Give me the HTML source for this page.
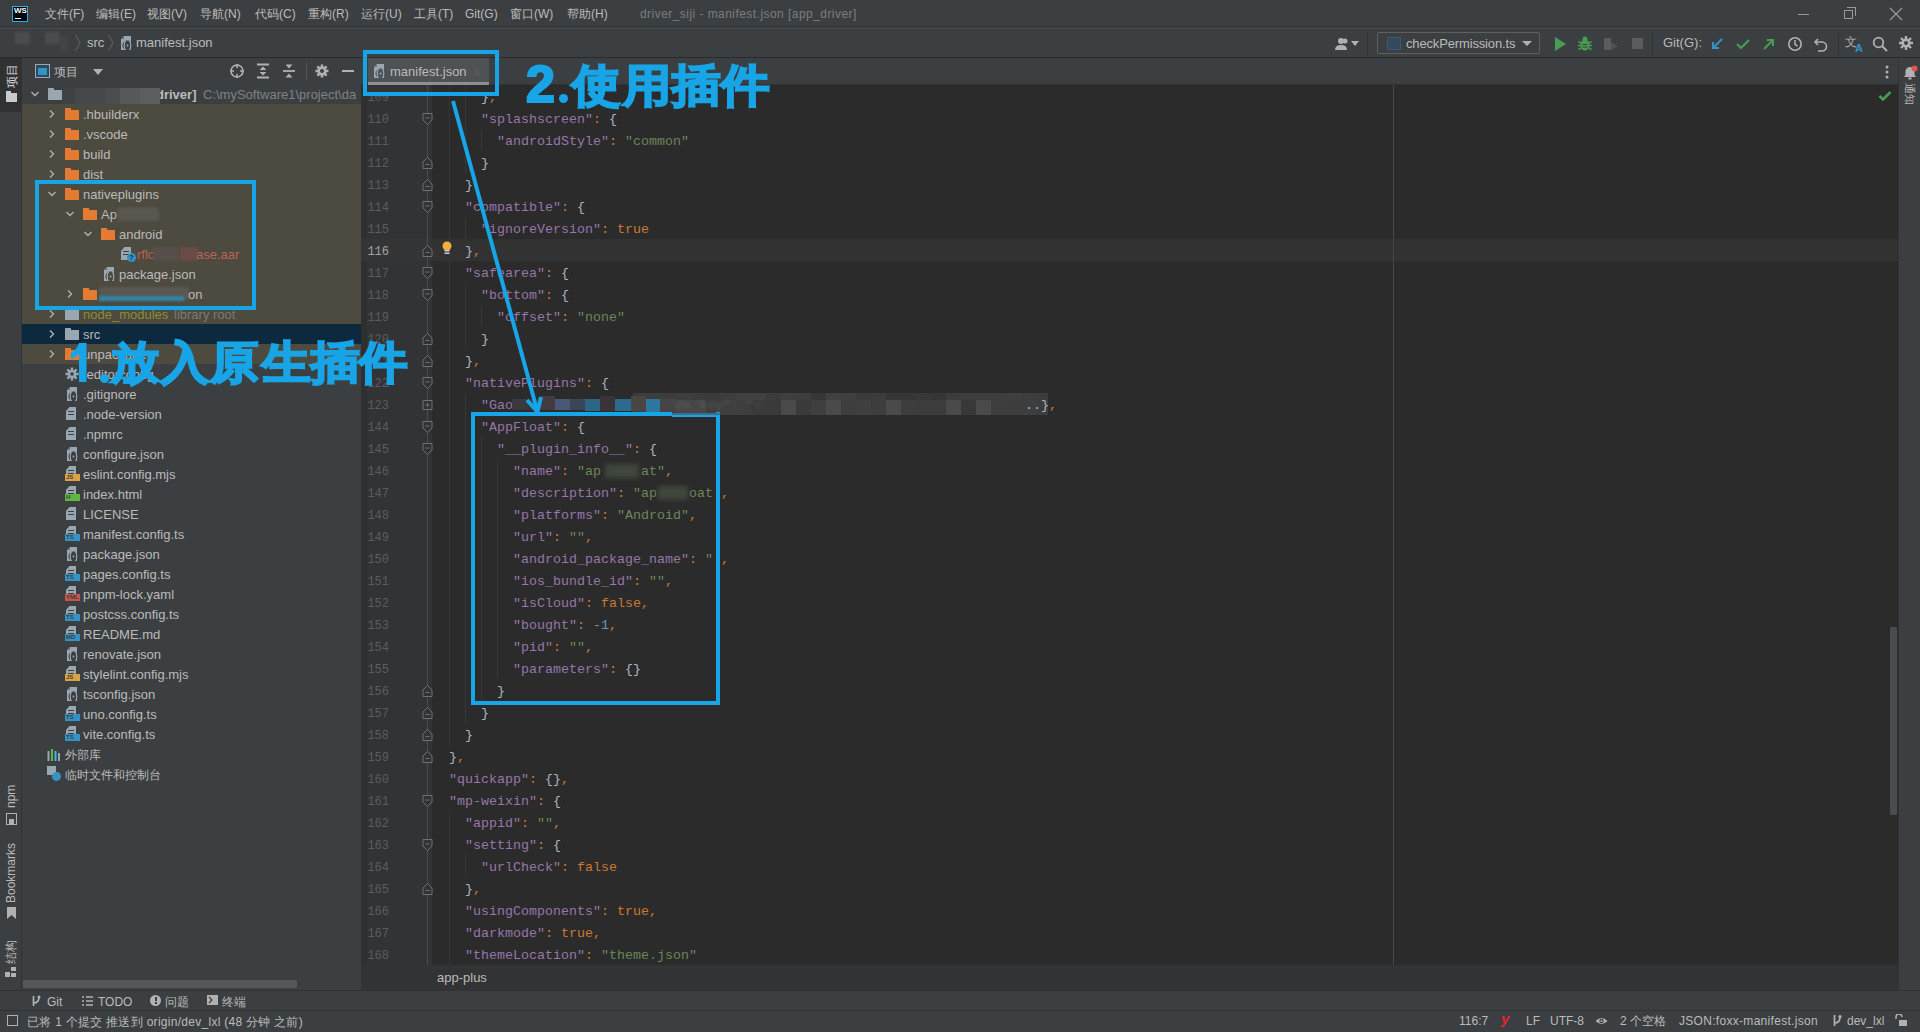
<!DOCTYPE html><html><head><meta charset="utf-8"><style>
*{margin:0;padding:0;box-sizing:border-box}
html,body{width:1920px;height:1032px;overflow:hidden;background:#3C3F41;font-family:"Liberation Sans",sans-serif;}
.a{position:absolute}
.t{position:absolute;white-space:pre;font-size:13px;color:#BBBBBB;line-height:20px}
.mono{font-family:"Liberation Mono",monospace}
.code{position:absolute;white-space:pre;font-family:"Liberation Mono",monospace;font-size:13.33px;line-height:22px;color:#A9B7C6;letter-spacing:0px}
.k{color:#9876AA}.s{color:#6A8759}.b{color:#CC7832}.n{color:#6897BB}.p{color:#CC7832}
.ln{position:absolute;font-family:"Liberation Mono",monospace;font-size:12px;color:#5A5D60;line-height:22px;text-align:right;width:30px}
.blue{border:4px solid #19A2E2}
</style></head><body>
<div class="a" style="left:0;top:0;width:1920px;height:28px;background:#3C3F41"></div>
<div class="a" style="left:0;top:26px;width:1920px;height:1px;background:#35383A"></div><div class="a" style="left:0;top:28px;width:1920px;height:1px;background:#46494B"></div>
<div class="a" style="left:12px;top:6px;width:16px;height:16px;background:#000;border:1px solid #21B1E8"></div>
<div class="a" style="left:14px;top:6px;font:bold 8px 'Liberation Sans';color:#fff;line-height:10px">WS</div>
<div class="a" style="left:15px;top:18px;width:6px;height:1px;background:#fff"></div>
<div class="t" style="left:45px;top:4px;font-size:12px;color:#BBBBBB">文件(F)</div>
<div class="t" style="left:96px;top:4px;font-size:12px;color:#BBBBBB">编辑(E)</div>
<div class="t" style="left:147px;top:4px;font-size:12px;color:#BBBBBB">视图(V)</div>
<div class="t" style="left:200px;top:4px;font-size:12px;color:#BBBBBB">导航(N)</div>
<div class="t" style="left:255px;top:4px;font-size:12px;color:#BBBBBB">代码(C)</div>
<div class="t" style="left:308px;top:4px;font-size:12px;color:#BBBBBB">重构(R)</div>
<div class="t" style="left:361px;top:4px;font-size:12px;color:#BBBBBB">运行(U)</div>
<div class="t" style="left:414px;top:4px;font-size:12px;color:#BBBBBB">工具(T)</div>
<div class="t" style="left:465px;top:4px;font-size:12px;color:#BBBBBB">Git(G)</div>
<div class="t" style="left:510px;top:4px;font-size:12px;color:#BBBBBB">窗口(W)</div>
<div class="t" style="left:567px;top:4px;font-size:12px;color:#BBBBBB">帮助(H)</div>
<div class="t" style="left:640px;top:4px;font-size:12px;letter-spacing:0.45px;color:#7A7D80">driver_siji - manifest.json [app_driver]</div>
<div class="a" style="left:1798px;top:14px;width:11px;height:1px;background:#9A9A9A"></div>
<div class="a" style="left:1844px;top:10px;width:9px;height:9px;border:1px solid #9A9A9A"></div><div class="a" style="left:1847px;top:7px;width:9px;height:9px;border-top:1px solid #9A9A9A;border-right:1px solid #9A9A9A"></div>
<svg class="a" style="left:1889px;top:7px" width="14" height="14"><path d="M1 1L13 13M13 1L1 13" stroke="#9A9A9A" stroke-width="1.2"/></svg>
<div class="a" style="left:0;top:57px;width:1920px;height:1px;background:#2B2B2B"></div>
<div class="a" style="left:15px;top:32px;width:15px;height:12px;background:#4A4C4E;filter:blur(0.8px)"></div>
<div class="a" style="left:45px;top:32px;width:15px;height:12px;background:#4A4C4E;filter:blur(0.8px)"></div>
<div class="a" style="left:60px;top:36px;width:8px;height:14px;background:#424547;filter:blur(1.5px)"></div>
<svg class="a" style="left:74px;top:34px" width="8" height="18"><path d="M1.5 1L6 9L1.5 17" stroke="#595C5E" stroke-width="1.3" fill="none"/></svg>
<div class="t" style="left:87px;top:33px;font-size:13px;color:#BBBBBB">src</div>
<svg class="a" style="left:107px;top:34px" width="8" height="18"><path d="M1.5 1L6 9L1.5 17" stroke="#595C5E" stroke-width="1.3" fill="none"/></svg>
<svg class="a" style="left:119px;top:35px" width="15" height="16"><path d="M5 1H12V15H2V4Z" fill="#9AA7B0"/><path d="M2 4L5 1V4Z" fill="#3C3F41" opacity="0.5"/><circle cx="8.5" cy="10.5" r="5" fill="#3C3F41"/><path d="M7 6.5Q5.3 6.5 5.5 8.5Q5.6 10.5 4.5 10.5Q5.6 10.5 5.5 12.5Q5.3 14.5 7 14.5M10 6.5Q11.7 6.5 11.5 8.5Q11.4 10.5 12.5 10.5Q11.4 10.5 11.5 12.5Q11.7 14.5 10 14.5" stroke="#9AA7B0" stroke-width="1.2" fill="none"/><circle cx="8.5" cy="10.5" r="1" fill="#9AA7B0"/></svg>
<div class="t" style="left:136px;top:33px;font-size:13px;color:#BBBBBB">manifest.json</div>
<div class="a" style="left:1334px;top:37px;width:12px;height:12px;"><svg width="20" height="14"><circle cx="7" cy="4" r="3" fill="#AFB1B3"/><path d="M1 13 Q1 8 7 8 Q13 8 13 13Z" fill="#AFB1B3"/><circle cx="11" cy="4" r="2.5" fill="#AFB1B3"/></svg></div>
<div class="a" style="left:1351px;top:41px;width:0;height:0;border-left:4px solid transparent;border-right:4px solid transparent;border-top:5px solid #AFB1B3"></div>
<div class="a" style="left:1367px;top:33px;width:1px;height:22px;background:#323232"></div>
<div class="a" style="left:1377px;top:32px;width:163px;height:22px;border:1px solid #5E6060;border-radius:2px"></div>
<div class="a" style="left:1387px;top:37px;width:14px;height:13px;border:1px solid #3A5A78;background:#34495A"></div>
<div class="t" style="left:1406px;top:34px;font-size:13px;letter-spacing:-0.15px;color:#BBBBBB">checkPermission.ts</div>
<div class="a" style="left:1522px;top:41px;width:0;height:0;border-left:5px solid transparent;border-right:5px solid transparent;border-top:5px solid #AFB1B3"></div>
<svg class="a" style="left:1552px;top:36px" width="16" height="16"><path d="M3 1 L14 8 L3 15Z" fill="#499C54"/></svg>
<svg class="a" style="left:1577px;top:35px" width="16" height="17"><ellipse cx="8" cy="10" rx="4.5" ry="5.5" fill="#499C54"/><circle cx="8" cy="4" r="2.5" fill="#499C54"/><path d="M1.5 6.5L4 8M14.5 6.5L12 8M1 10.5H4M15 10.5H12M1.5 14.5L4 13M14.5 14.5L12 13" stroke="#499C54" stroke-width="1.5"/><path d="M5.5 9.5H10.5M5.5 12H10.5" stroke="#3C3F41" stroke-width="1"/></svg>
<svg class="a" style="left:1602px;top:36px" width="18" height="16"><path d="M2 2H9V14H2Z" fill="#5A5D5F"/><path d="M9 6L16 10L9 14Z" fill="#4E5153"/></svg>
<div class="a" style="left:1632px;top:38px;width:11px;height:11px;background:#5A5D5F"></div>
<div class="a" style="left:1652px;top:33px;width:1px;height:22px;background:#323232"></div>
<div class="t" style="left:1663px;top:33px;font-size:13px;color:#BBBBBB">Git(G):</div>
<svg class="a" style="left:1709px;top:36px" width="16" height="16"><path d="M13 3L4 12M4 6V12H10" stroke="#3592C4" stroke-width="2" fill="none"/></svg>
<svg class="a" style="left:1735px;top:36px" width="16" height="16"><path d="M2 8L6 12L14 4" stroke="#499C54" stroke-width="2.2" fill="none"/></svg>
<svg class="a" style="left:1761px;top:36px" width="16" height="16"><path d="M3 13L12 4M6 4H12V10" stroke="#499C54" stroke-width="2" fill="none"/></svg>
<svg class="a" style="left:1787px;top:36px" width="16" height="16"><circle cx="8" cy="8" r="6.2" stroke="#AFB1B3" stroke-width="1.6" fill="none"/><path d="M8 4V8.5L10.5 10" stroke="#AFB1B3" stroke-width="1.5" fill="none"/></svg>
<svg class="a" style="left:1813px;top:36px" width="16" height="16"><path d="M5 3L2 6L5 9M2 6H9A4.5 4.5 0 0 1 9 15H5" stroke="#AFB1B3" stroke-width="1.6" fill="none"/></svg>
<div class="a" style="left:1838px;top:33px;width:1px;height:22px;background:#323232"></div>
<div class="t" style="left:1845px;top:32px;font-size:12px;color:#AFB1B3">文</div>
<div class="t" style="left:1855px;top:38px;font-size:11px;font-weight:bold;color:#3592C4">A</div>
<svg class="a" style="left:1872px;top:36px" width="16" height="16"><circle cx="6.5" cy="6.5" r="4.8" stroke="#AFB1B3" stroke-width="1.8" fill="none"/><path d="M10 10L15 15" stroke="#AFB1B3" stroke-width="2"/></svg>
<svg class="a" style="left:1898px;top:35px" width="16" height="16"><circle cx="8" cy="8" r="4.5" fill="#AFB1B3"/><circle cx="8" cy="8" r="2" fill="#3C3F41"/><path d="M8 1V15M1 8H15M3 3L13 13M13 3L3 13" stroke="#AFB1B3" stroke-width="2.4"/><circle cx="8" cy="8" r="2" fill="#3C3F41"/></svg>
<div class="a" style="left:0;top:58px;width:21px;height:932px;background:#3C3F41"></div>
<div class="a" style="left:0;top:58px;width:21px;height:54px;background:#2F3133"></div>
<div class="a" style="left:21px;top:58px;width:1px;height:932px;background:#323232"></div>
<div class="t" style="left:2px;top:88px;font-size:12px;line-height:20px;color:#DDDDDD;transform-origin:0 0;transform:rotate(-90deg)">项目</div>
<div class="a" style="left:6px;top:93px;width:11px;height:9px;background:#C9CCCE"></div><div class="a" style="left:6px;top:91px;width:5px;height:3px;background:#C9CCCE"></div>
<div class="t" style="left:1px;top:808px;font-size:12px;line-height:20px;color:#BBBBBB;transform-origin:0 0;transform:rotate(-90deg)">npm</div>
<div class="a" style="left:6px;top:813px;width:11px;height:12px;border:1.5px solid #AFB1B3"></div><div class="a" style="left:9px;top:819px;width:5px;height:6px;background:#AFB1B3"></div>
<div class="t" style="left:1px;top:903px;font-size:12px;line-height:20px;color:#BBBBBB;transform-origin:0 0;transform:rotate(-90deg)">Bookmarks</div>
<svg class="a" style="left:6px;top:907px" width="11" height="12"><path d="M1 0H10V12L5.5 8L1 12Z" fill="#AFB1B3"/></svg>
<div class="t" style="left:1px;top:964px;font-size:12px;line-height:20px;color:#BBBBBB;transform-origin:0 0;transform:rotate(-90deg)">结构</div>
<div class="a" style="left:5px;top:972px;width:5px;height:5px;background:#AFB1B3"></div><div class="a" style="left:11px;top:967px;width:5px;height:4px;background:#AFB1B3"></div><div class="a" style="left:11px;top:973px;width:5px;height:4px;background:#AFB1B3"></div>
<div class="a" style="left:22px;top:58px;width:339px;height:932px;background:#3C3F41"></div>
<div class="a" style="left:35px;top:64px;width:15px;height:14px;border:1.5px solid #9AA7B0;background:#2B4A5E"></div><div class="a" style="left:38px;top:68px;width:9px;height:7px;background:#3592C4"></div>
<div class="t" style="left:54px;top:62px;font-size:12px;color:#BBBBBB">项目</div>
<div class="a" style="left:93px;top:69px;width:0;height:0;border-left:5px solid transparent;border-right:5px solid transparent;border-top:6px solid #AFB1B3"></div>
<svg class="a" style="left:229px;top:63px" width="16" height="16"><circle cx="8" cy="8" r="6" stroke="#AFB1B3" stroke-width="1.6" fill="none"/><path d="M8 1V5M8 11V15M1 8H5M11 8H15" stroke="#AFB1B3" stroke-width="1.6"/></svg>
<svg class="a" style="left:256px;top:63px" width="14" height="16"><path d="M1 1.5H13M1 14.5H13" stroke="#AFB1B3" stroke-width="1.8"/><path d="M3.5 7H10.5L7 3.5Z M3.5 9H10.5L7 12.5Z" fill="#AFB1B3"/></svg>
<svg class="a" style="left:282px;top:63px" width="14" height="16"><path d="M1 8H13" stroke="#AFB1B3" stroke-width="1.8"/><path d="M3.5 1.5H10.5L7 5.5Z M3.5 14.5H10.5L7 10.5Z" fill="#AFB1B3"/></svg>
<div class="a" style="left:306px;top:62px;width:1px;height:18px;background:#515658"></div>
<svg class="a" style="left:314px;top:63px" width="16" height="16"><path d="M8 1.5V14.5M1.5 8H14.5M3.4 3.4L12.6 12.6M12.6 3.4L3.4 12.6" stroke="#AFB1B3" stroke-width="2.6"/><circle cx="8" cy="8" r="4.6" fill="#AFB1B3"/><circle cx="8" cy="8" r="2" fill="#3C3F41"/></svg>
<div class="a" style="left:342px;top:70px;width:12px;height:2px;background:#AFB1B3"></div>
<div class="a" style="left:22px;top:104px;width:339px;height:220px;background:#4D4A3F"></div>
<div class="a" style="left:22px;top:324px;width:339px;height:20px;background:#0D293E"></div>
<div class="a" style="left:22px;top:344px;width:339px;height:20px;background:#4D4A3F"></div>
<svg class="a" style="left:30px;top:89px" width="10" height="10"><path d="M1.5 3L5 6.5L8.5 3" stroke="#AFB1B3" stroke-width="1.4" fill="none"/></svg>
<div class="a" style="left:48px;top:88px;width:6px;height:3px;background:#9AA7B0"></div><div class="a" style="left:48px;top:90px;width:14px;height:10px;background:#9AA7B0"></div>
<div class="a" style="left:62px;top:88px;width:13px;height:16px;background:#3F4244"></div>
<div class="a" style="left:75px;top:88px;width:30px;height:16px;background:#46494B"></div>
<div class="a" style="left:105px;top:88px;width:15px;height:16px;background:#4B4E50"></div>
<div class="a" style="left:120px;top:88px;width:20px;height:16px;background:#56585A"></div>
<div class="a" style="left:140px;top:88px;width:19px;height:16px;background:#5B5D5F"></div>
<div class="t" style="left:156px;top:85px;font-weight:bold;color:#BBBBBB">driver]</div>
<div class="a" style="left:155px;top:88px;width:5px;height:16px;background:#5B5D5F"></div>
<div class="t" style="left:203px;top:85px;color:#7F8285">C:\mySoftware1\project\da</div>
<svg class="a" style="left:47px;top:109px" width="10" height="10"><path d="M3 1.5L6.5 5L3 8.5" stroke="#AFB1B3" stroke-width="1.4" fill="none"/></svg>
<div class="a" style="left:65px;top:108px;width:6px;height:3px;background:#E57A33"></div><div class="a" style="left:65px;top:110px;width:14px;height:10px;background:#E57A33"></div>
<div class="t" style="left:83px;top:105px">.hbuilderx</div>
<svg class="a" style="left:47px;top:129px" width="10" height="10"><path d="M3 1.5L6.5 5L3 8.5" stroke="#AFB1B3" stroke-width="1.4" fill="none"/></svg>
<div class="a" style="left:65px;top:128px;width:6px;height:3px;background:#E57A33"></div><div class="a" style="left:65px;top:130px;width:14px;height:10px;background:#E57A33"></div>
<div class="t" style="left:83px;top:125px">.vscode</div>
<svg class="a" style="left:47px;top:149px" width="10" height="10"><path d="M3 1.5L6.5 5L3 8.5" stroke="#AFB1B3" stroke-width="1.4" fill="none"/></svg>
<div class="a" style="left:65px;top:148px;width:6px;height:3px;background:#E57A33"></div><div class="a" style="left:65px;top:150px;width:14px;height:10px;background:#E57A33"></div>
<div class="t" style="left:83px;top:145px">build</div>
<svg class="a" style="left:47px;top:169px" width="10" height="10"><path d="M3 1.5L6.5 5L3 8.5" stroke="#AFB1B3" stroke-width="1.4" fill="none"/></svg>
<div class="a" style="left:65px;top:168px;width:6px;height:3px;background:#E57A33"></div><div class="a" style="left:65px;top:170px;width:14px;height:10px;background:#E57A33"></div>
<div class="t" style="left:83px;top:165px">dist</div>
<svg class="a" style="left:47px;top:189px" width="10" height="10"><path d="M1.5 3L5 6.5L8.5 3" stroke="#AFB1B3" stroke-width="1.4" fill="none"/></svg>
<div class="a" style="left:65px;top:188px;width:6px;height:3px;background:#E57A33"></div><div class="a" style="left:65px;top:190px;width:14px;height:10px;background:#E57A33"></div>
<div class="t" style="left:83px;top:185px">nativeplugins</div>
<svg class="a" style="left:65px;top:209px" width="10" height="10"><path d="M1.5 3L5 6.5L8.5 3" stroke="#AFB1B3" stroke-width="1.4" fill="none"/></svg>
<div class="a" style="left:83px;top:208px;width:6px;height:3px;background:#E57A33"></div><div class="a" style="left:83px;top:210px;width:14px;height:10px;background:#E57A33"></div>
<div class="t" style="left:101px;top:205px">Ap</div>
<div class="a" style="left:117px;top:207px;width:42px;height:14px;background:#5A5750;filter:blur(1.5px);border-radius:4px"></div>
<svg class="a" style="left:83px;top:229px" width="10" height="10"><path d="M1.5 3L5 6.5L8.5 3" stroke="#AFB1B3" stroke-width="1.4" fill="none"/></svg>
<div class="a" style="left:101px;top:228px;width:6px;height:3px;background:#E57A33"></div><div class="a" style="left:101px;top:230px;width:14px;height:10px;background:#E57A33"></div>
<div class="t" style="left:119px;top:225px">android</div>
<div class="a" style="left:121px;top:247px;width:10px;height:13px;background:#9AA7B0;clip-path:polygon(35% 0,100% 0,100% 100%,0 100%,0 30%)"></div><div class="a" style="left:123px;top:251px;width:6px;height:1px;background:#3C3F41"></div><div class="a" style="left:123px;top:254px;width:6px;height:1px;background:#3C3F41"></div>
<div class="a" style="left:127px;top:253px;width:9px;height:9px;border-radius:5px;background:#3592C4;color:#1E3040;font:bold 8px/9px 'Liberation Sans';text-align:center">?</div>
<div class="t" style="left:137px;top:245px;color:#BC6259">rflc</div>
<div class="a" style="left:153px;top:247px;width:26px;height:14px;background:#57504A;filter:blur(1px)"></div>
<div class="a" style="left:180px;top:247px;width:18px;height:14px;background:#6A4C46;filter:blur(1px)"></div>
<div class="t" style="left:196px;top:245px;color:#BC6259">ase.aar</div>
<svg class="a" style="left:102px;top:266px" width="15" height="16"><path d="M5 1H12V15H2V4Z" fill="#9AA7B0"/><path d="M2 4L5 1V4Z" fill="#4D4A3F" opacity="0.5"/><circle cx="8.5" cy="10.5" r="5" fill="#4D4A3F"/><path d="M7 6.5Q5.3 6.5 5.5 8.5Q5.6 10.5 4.5 10.5Q5.6 10.5 5.5 12.5Q5.3 14.5 7 14.5M10 6.5Q11.7 6.5 11.5 8.5Q11.4 10.5 12.5 10.5Q11.4 10.5 11.5 12.5Q11.7 14.5 10 14.5" stroke="#9AA7B0" stroke-width="1.2" fill="none"/><circle cx="8.5" cy="10.5" r="1" fill="#9AA7B0"/></svg>
<div class="t" style="left:119px;top:265px">package.json</div>
<svg class="a" style="left:65px;top:289px" width="10" height="10"><path d="M3 1.5L6.5 5L3 8.5" stroke="#AFB1B3" stroke-width="1.4" fill="none"/></svg>
<div class="a" style="left:83px;top:288px;width:6px;height:3px;background:#E57A33"></div><div class="a" style="left:83px;top:290px;width:14px;height:10px;background:#E57A33"></div>
<div class="a" style="left:99px;top:287px;width:90px;height:13px;background:#5A5850;filter:blur(1px)"></div>
<div class="a" style="left:99px;top:296px;width:85px;height:5px;background:#2F84A6;filter:blur(1.2px)"></div>
<div class="t" style="left:188px;top:285px">on</div>
<svg class="a" style="left:47px;top:309px" width="10" height="10"><path d="M3 1.5L6.5 5L3 8.5" stroke="#AFB1B3" stroke-width="1.4" fill="none"/></svg>
<div class="a" style="left:65px;top:308px;width:6px;height:3px;background:#9AA7B0"></div><div class="a" style="left:65px;top:310px;width:14px;height:10px;background:#9AA7B0"></div>
<div class="t" style="left:83px;top:305px;color:#8E8B3A">node_modules</div><div class="t" style="left:174px;top:305px;color:#7A7A72">library root</div>
<svg class="a" style="left:47px;top:329px" width="10" height="10"><path d="M3 1.5L6.5 5L3 8.5" stroke="#AFB1B3" stroke-width="1.4" fill="none"/></svg>
<div class="a" style="left:65px;top:328px;width:6px;height:3px;background:#9AA7B0"></div><div class="a" style="left:65px;top:330px;width:14px;height:10px;background:#9AA7B0"></div>
<div class="t" style="left:83px;top:325px">src</div>
<svg class="a" style="left:47px;top:349px" width="10" height="10"><path d="M3 1.5L6.5 5L3 8.5" stroke="#AFB1B3" stroke-width="1.4" fill="none"/></svg>
<div class="a" style="left:65px;top:348px;width:6px;height:3px;background:#E57A33"></div><div class="a" style="left:65px;top:350px;width:14px;height:10px;background:#E57A33"></div>
<div class="t" style="left:83px;top:345px">unpackage</div>
<svg class="a" style="left:65px;top:367px" width="14" height="14"><path d="M7 0.5V13.5M0.5 7H13.5M2.4 2.4L11.6 11.6M11.6 2.4L2.4 11.6" stroke="#9AA7B0" stroke-width="2.4"/><circle cx="7" cy="7" r="4" fill="#9AA7B0"/><circle cx="7" cy="7" r="1.8" fill="#3C3F41"/></svg>
<div class="t" style="left:83px;top:365px">.editorconfig</div>
<svg class="a" style="left:65px;top:386px" width="15" height="16"><path d="M5 1H12V15H2V4Z" fill="#9AA7B0"/><path d="M2 4L5 1V4Z" fill="#3C3F41" opacity="0.5"/><circle cx="8.5" cy="10.5" r="5" fill="#3C3F41"/><path d="M7 6.5Q5.3 6.5 5.5 8.5Q5.6 10.5 4.5 10.5Q5.6 10.5 5.5 12.5Q5.3 14.5 7 14.5M10 6.5Q11.7 6.5 11.5 8.5Q11.4 10.5 12.5 10.5Q11.4 10.5 11.5 12.5Q11.7 14.5 10 14.5" stroke="#9AA7B0" stroke-width="1.2" fill="none"/><circle cx="8.5" cy="10.5" r="1" fill="#9AA7B0"/></svg>
<div class="t" style="left:83px;top:385px">.gitignore</div>
<div class="a" style="left:66px;top:407px;width:10px;height:13px;background:#9AA7B0;clip-path:polygon(35% 0,100% 0,100% 100%,0 100%,0 30%)"></div><div class="a" style="left:68px;top:411px;width:6px;height:1px;background:#3C3F41"></div><div class="a" style="left:68px;top:414px;width:6px;height:1px;background:#3C3F41"></div>
<div class="t" style="left:83px;top:405px">.node-version</div>
<div class="a" style="left:66px;top:427px;width:10px;height:13px;background:#9AA7B0;clip-path:polygon(35% 0,100% 0,100% 100%,0 100%,0 30%)"></div><div class="a" style="left:68px;top:431px;width:6px;height:1px;background:#3C3F41"></div><div class="a" style="left:68px;top:434px;width:6px;height:1px;background:#3C3F41"></div>
<div class="t" style="left:83px;top:425px">.npmrc</div>
<svg class="a" style="left:65px;top:446px" width="15" height="16"><path d="M5 1H12V15H2V4Z" fill="#9AA7B0"/><path d="M2 4L5 1V4Z" fill="#3C3F41" opacity="0.5"/><circle cx="8.5" cy="10.5" r="5" fill="#3C3F41"/><path d="M7 6.5Q5.3 6.5 5.5 8.5Q5.6 10.5 4.5 10.5Q5.6 10.5 5.5 12.5Q5.3 14.5 7 14.5M10 6.5Q11.7 6.5 11.5 8.5Q11.4 10.5 12.5 10.5Q11.4 10.5 11.5 12.5Q11.7 14.5 10 14.5" stroke="#9AA7B0" stroke-width="1.2" fill="none"/><circle cx="8.5" cy="10.5" r="1" fill="#9AA7B0"/></svg>
<div class="t" style="left:83px;top:445px">configure.json</div>
<div class="a" style="left:66px;top:466px;width:10px;height:13px;background:#9AA7B0;clip-path:polygon(35% 0,100% 0,100% 100%,0 100%,0 30%)"></div><div class="a" style="left:68px;top:470px;width:6px;height:1px;background:#3C3F41"></div><div class="a" style="left:68px;top:473px;width:6px;height:1px;background:#3C3F41"></div><div class="a" style="left:65px;top:474px;width:15px;height:7px;background:#D9A343;color:#3C3F41;font:bold 6px/7px 'Liberation Sans';text-align:left;padding-left:1px">JS</div>
<div class="t" style="left:83px;top:465px">eslint.config.mjs</div>
<div class="a" style="left:66px;top:486px;width:10px;height:13px;background:#9AA7B0;clip-path:polygon(35% 0,100% 0,100% 100%,0 100%,0 30%)"></div><div class="a" style="left:68px;top:490px;width:6px;height:1px;background:#3C3F41"></div><div class="a" style="left:68px;top:493px;width:6px;height:1px;background:#3C3F41"></div><div class="a" style="left:65px;top:494px;width:15px;height:7px;background:#62B543;color:#3C3F41;font:bold 6px/7px 'Liberation Sans';text-align:left;padding-left:1px">H</div>
<div class="t" style="left:83px;top:485px">index.html</div>
<div class="a" style="left:66px;top:507px;width:10px;height:13px;background:#9AA7B0;clip-path:polygon(35% 0,100% 0,100% 100%,0 100%,0 30%)"></div><div class="a" style="left:68px;top:511px;width:6px;height:1px;background:#3C3F41"></div><div class="a" style="left:68px;top:514px;width:6px;height:1px;background:#3C3F41"></div>
<div class="t" style="left:83px;top:505px">LICENSE</div>
<div class="a" style="left:66px;top:526px;width:10px;height:13px;background:#9AA7B0;clip-path:polygon(35% 0,100% 0,100% 100%,0 100%,0 30%)"></div><div class="a" style="left:68px;top:530px;width:6px;height:1px;background:#3C3F41"></div><div class="a" style="left:68px;top:533px;width:6px;height:1px;background:#3C3F41"></div><div class="a" style="left:65px;top:534px;width:15px;height:7px;background:#3592C4;color:#3C3F41;font:bold 6px/7px 'Liberation Sans';text-align:left;padding-left:1px">TS</div>
<div class="t" style="left:83px;top:525px">manifest.config.ts</div>
<svg class="a" style="left:65px;top:546px" width="15" height="16"><path d="M5 1H12V15H2V4Z" fill="#9AA7B0"/><path d="M2 4L5 1V4Z" fill="#3C3F41" opacity="0.5"/><circle cx="8.5" cy="10.5" r="5" fill="#3C3F41"/><path d="M7 6.5Q5.3 6.5 5.5 8.5Q5.6 10.5 4.5 10.5Q5.6 10.5 5.5 12.5Q5.3 14.5 7 14.5M10 6.5Q11.7 6.5 11.5 8.5Q11.4 10.5 12.5 10.5Q11.4 10.5 11.5 12.5Q11.7 14.5 10 14.5" stroke="#9AA7B0" stroke-width="1.2" fill="none"/><circle cx="8.5" cy="10.5" r="1" fill="#9AA7B0"/></svg>
<div class="t" style="left:83px;top:545px">package.json</div>
<div class="a" style="left:66px;top:566px;width:10px;height:13px;background:#9AA7B0;clip-path:polygon(35% 0,100% 0,100% 100%,0 100%,0 30%)"></div><div class="a" style="left:68px;top:570px;width:6px;height:1px;background:#3C3F41"></div><div class="a" style="left:68px;top:573px;width:6px;height:1px;background:#3C3F41"></div><div class="a" style="left:65px;top:574px;width:15px;height:7px;background:#3592C4;color:#3C3F41;font:bold 6px/7px 'Liberation Sans';text-align:left;padding-left:1px">TS</div>
<div class="t" style="left:83px;top:565px">pages.config.ts</div>
<div class="a" style="left:66px;top:586px;width:10px;height:13px;background:#9AA7B0;clip-path:polygon(35% 0,100% 0,100% 100%,0 100%,0 30%)"></div><div class="a" style="left:68px;top:590px;width:6px;height:1px;background:#3C3F41"></div><div class="a" style="left:68px;top:593px;width:6px;height:1px;background:#3C3F41"></div><div class="a" style="left:65px;top:594px;width:15px;height:7px;background:#C75450;color:#3C3F41;font:bold 6px/7px 'Liberation Sans';text-align:left;padding-left:1px">YML</div>
<div class="t" style="left:83px;top:585px">pnpm-lock.yaml</div>
<div class="a" style="left:66px;top:606px;width:10px;height:13px;background:#9AA7B0;clip-path:polygon(35% 0,100% 0,100% 100%,0 100%,0 30%)"></div><div class="a" style="left:68px;top:610px;width:6px;height:1px;background:#3C3F41"></div><div class="a" style="left:68px;top:613px;width:6px;height:1px;background:#3C3F41"></div><div class="a" style="left:65px;top:614px;width:15px;height:7px;background:#3592C4;color:#3C3F41;font:bold 6px/7px 'Liberation Sans';text-align:left;padding-left:1px">TS</div>
<div class="t" style="left:83px;top:605px">postcss.config.ts</div>
<div class="a" style="left:66px;top:626px;width:10px;height:13px;background:#9AA7B0;clip-path:polygon(35% 0,100% 0,100% 100%,0 100%,0 30%)"></div><div class="a" style="left:68px;top:630px;width:6px;height:1px;background:#3C3F41"></div><div class="a" style="left:68px;top:633px;width:6px;height:1px;background:#3C3F41"></div><div class="a" style="left:65px;top:634px;width:15px;height:7px;background:#3592C4;color:#3C3F41;font:bold 6px/7px 'Liberation Sans';text-align:left;padding-left:1px">MD</div>
<div class="t" style="left:83px;top:625px">README.md</div>
<svg class="a" style="left:65px;top:646px" width="15" height="16"><path d="M5 1H12V15H2V4Z" fill="#9AA7B0"/><path d="M2 4L5 1V4Z" fill="#3C3F41" opacity="0.5"/><circle cx="8.5" cy="10.5" r="5" fill="#3C3F41"/><path d="M7 6.5Q5.3 6.5 5.5 8.5Q5.6 10.5 4.5 10.5Q5.6 10.5 5.5 12.5Q5.3 14.5 7 14.5M10 6.5Q11.7 6.5 11.5 8.5Q11.4 10.5 12.5 10.5Q11.4 10.5 11.5 12.5Q11.7 14.5 10 14.5" stroke="#9AA7B0" stroke-width="1.2" fill="none"/><circle cx="8.5" cy="10.5" r="1" fill="#9AA7B0"/></svg>
<div class="t" style="left:83px;top:645px">renovate.json</div>
<div class="a" style="left:66px;top:666px;width:10px;height:13px;background:#9AA7B0;clip-path:polygon(35% 0,100% 0,100% 100%,0 100%,0 30%)"></div><div class="a" style="left:68px;top:670px;width:6px;height:1px;background:#3C3F41"></div><div class="a" style="left:68px;top:673px;width:6px;height:1px;background:#3C3F41"></div><div class="a" style="left:65px;top:674px;width:15px;height:7px;background:#D9A343;color:#3C3F41;font:bold 6px/7px 'Liberation Sans';text-align:left;padding-left:1px">JS</div>
<div class="t" style="left:83px;top:665px">stylelint.config.mjs</div>
<svg class="a" style="left:65px;top:686px" width="15" height="16"><path d="M5 1H12V15H2V4Z" fill="#9AA7B0"/><path d="M2 4L5 1V4Z" fill="#3C3F41" opacity="0.5"/><circle cx="8.5" cy="10.5" r="5" fill="#3C3F41"/><path d="M7 6.5Q5.3 6.5 5.5 8.5Q5.6 10.5 4.5 10.5Q5.6 10.5 5.5 12.5Q5.3 14.5 7 14.5M10 6.5Q11.7 6.5 11.5 8.5Q11.4 10.5 12.5 10.5Q11.4 10.5 11.5 12.5Q11.7 14.5 10 14.5" stroke="#9AA7B0" stroke-width="1.2" fill="none"/><circle cx="8.5" cy="10.5" r="1" fill="#9AA7B0"/></svg>
<div class="t" style="left:83px;top:685px">tsconfig.json</div>
<div class="a" style="left:66px;top:706px;width:10px;height:13px;background:#9AA7B0;clip-path:polygon(35% 0,100% 0,100% 100%,0 100%,0 30%)"></div><div class="a" style="left:68px;top:710px;width:6px;height:1px;background:#3C3F41"></div><div class="a" style="left:68px;top:713px;width:6px;height:1px;background:#3C3F41"></div><div class="a" style="left:65px;top:714px;width:15px;height:7px;background:#3592C4;color:#3C3F41;font:bold 6px/7px 'Liberation Sans';text-align:left;padding-left:1px">TS</div>
<div class="t" style="left:83px;top:705px">uno.config.ts</div>
<div class="a" style="left:66px;top:726px;width:10px;height:13px;background:#9AA7B0;clip-path:polygon(35% 0,100% 0,100% 100%,0 100%,0 30%)"></div><div class="a" style="left:68px;top:730px;width:6px;height:1px;background:#3C3F41"></div><div class="a" style="left:68px;top:733px;width:6px;height:1px;background:#3C3F41"></div><div class="a" style="left:65px;top:734px;width:15px;height:7px;background:#3592C4;color:#3C3F41;font:bold 6px/7px 'Liberation Sans';text-align:left;padding-left:1px">TS</div>
<div class="t" style="left:83px;top:725px">vite.config.ts</div>
<svg class="a" style="left:47px;top:748px" width="14" height="13"><path d="M1.5 3V13" stroke-width="2" stroke="#9AA7B0"/><path d="M5 1V13" stroke-width="2" stroke="#62B543"/><path d="M8.5 3V13" stroke-width="2" stroke="#40B6E0"/><path d="M12 5V13" stroke-width="2" stroke="#9AA7B0"/></svg>
<div class="t" style="left:65px;top:745px;font-size:12px">外部库</div>
<div class="a" style="left:47px;top:766px;width:9px;height:9px;background:#9AA7B0"></div><div class="a" style="left:52px;top:772px;width:9px;height:9px;border-radius:5px;background:#3592C4"></div>
<div class="t" style="left:65px;top:765px;font-size:12px">临时文件和控制台</div>
<div class="a" style="left:23px;top:980px;width:274px;height:8px;background:#55585A;border-radius:1px"></div>
<div class="a" style="left:361px;top:58px;width:1538px;height:27px;background:#3C3F41"></div>
<div class="a" style="left:361px;top:84px;width:1538px;height:1px;background:#323232"></div>
<div class="a" style="left:368px;top:58px;width:121px;height:27px;background:#4E5254"></div>
<div class="a" style="left:368px;top:82px;width:121px;height:3px;background:#8D8F91"></div>
<svg class="a" style="left:372px;top:63px" width="15" height="16"><path d="M5 1H12V15H2V4Z" fill="#9AA7B0"/><path d="M2 4L5 1V4Z" fill="#4E5254" opacity="0.5"/><circle cx="8.5" cy="10.5" r="5" fill="#4E5254"/><path d="M7 6.5Q5.3 6.5 5.5 8.5Q5.6 10.5 4.5 10.5Q5.6 10.5 5.5 12.5Q5.3 14.5 7 14.5M10 6.5Q11.7 6.5 11.5 8.5Q11.4 10.5 12.5 10.5Q11.4 10.5 11.5 12.5Q11.7 14.5 10 14.5" stroke="#9AA7B0" stroke-width="1.2" fill="none"/><circle cx="8.5" cy="10.5" r="1" fill="#9AA7B0"/></svg>
<div class="t" style="left:390px;top:62px;font-size:13px;color:#BBBBBB">manifest.json</div>
<div class="t" style="left:472px;top:62px;font-size:11px;color:#5C5F61">✕</div>
<svg class="a" style="left:1882px;top:64px" width="10" height="16"><circle cx="5" cy="3" r="1.5" fill="#AFB1B3"/><circle cx="5" cy="8" r="1.5" fill="#AFB1B3"/><circle cx="5" cy="13" r="1.5" fill="#AFB1B3"/></svg>
<div class="a" style="left:361px;top:85px;width:1538px;height:880px;background:#2B2B2B"></div>
<div class="a" style="left:361px;top:85px;width:71px;height:880px;background:#313335"></div>
<div class="a" style="left:361px;top:85px;width:6px;height:880px;background:#2D2F31"></div>
<div class="a" style="left:432px;top:239px;width:1466px;height:22px;background:#323232"></div>
<div class="a" style="left:361px;top:239px;width:71px;height:22px;background:#333537"></div>
<div class="a" style="left:1393px;top:85px;width:1px;height:880px;background:#474747"></div>
<div class="a" style="left:1890px;top:627px;width:7px;height:188px;background:#4A4C4E;border-radius:1px"></div>
<svg class="a" style="left:1878px;top:90px" width="14" height="12"><path d="M1.5 6L5 9.5L12.5 2" stroke="#499C54" stroke-width="2.5" fill="none"/></svg>
<div class="a" style="left:427px;top:85px;width:1px;height:880px;background:#4A4C4E"></div>
<div class="ln" style="left:359px;top:87px;">109</div>
<div class="code" style="left:481px;top:87px">}<span class="p">,</span></div>
<div class="ln" style="left:359px;top:109px;">110</div>
<div class="code" style="left:481px;top:109px"><span class="k">"splashscreen"</span><span style="color:#CC7832">:</span> {</div>
<div class="ln" style="left:359px;top:131px;">111</div>
<div class="code" style="left:497px;top:131px"><span class="k">"androidStyle"</span><span style="color:#CC7832">:</span> <span class="s">"common"</span></div>
<div class="ln" style="left:359px;top:153px;">112</div>
<div class="code" style="left:481px;top:153px">}</div>
<div class="ln" style="left:359px;top:175px;">113</div>
<div class="code" style="left:465px;top:175px">}</div>
<div class="ln" style="left:359px;top:197px;">114</div>
<div class="code" style="left:465px;top:197px"><span class="k">"compatible"</span><span style="color:#CC7832">:</span> {</div>
<div class="ln" style="left:359px;top:219px;">115</div>
<div class="code" style="left:481px;top:219px"><span class="k">"ignoreVersion"</span><span style="color:#CC7832">:</span> <span class="b">true</span></div>
<div class="ln" style="left:359px;top:241px;color:#A4A3A3">116</div>
<div class="code" style="left:465px;top:241px">}<span class="p">,</span></div>
<div class="ln" style="left:359px;top:263px;">117</div>
<div class="code" style="left:465px;top:263px"><span class="k">"safearea"</span><span style="color:#CC7832">:</span> {</div>
<div class="ln" style="left:359px;top:285px;">118</div>
<div class="code" style="left:481px;top:285px"><span class="k">"bottom"</span><span style="color:#CC7832">:</span> {</div>
<div class="ln" style="left:359px;top:307px;">119</div>
<div class="code" style="left:497px;top:307px"><span class="k">"offset"</span><span style="color:#CC7832">:</span> <span class="s">"none"</span></div>
<div class="ln" style="left:359px;top:329px;">120</div>
<div class="code" style="left:481px;top:329px">}</div>
<div class="ln" style="left:359px;top:351px;">121</div>
<div class="code" style="left:465px;top:351px">}<span class="p">,</span></div>
<div class="ln" style="left:359px;top:373px;">122</div>
<div class="code" style="left:465px;top:373px"><span class="k">"nativePlugins"</span><span style="color:#CC7832">:</span> {</div>
<div class="ln" style="left:359px;top:395px;">123</div>
<div class="code" style="left:481px;top:395px"><span class="k">"Gao</span></div>
<div class="ln" style="left:359px;top:417px;">144</div>
<div class="code" style="left:481px;top:417px"><span class="k">"AppFloat"</span><span style="color:#CC7832">:</span> {</div>
<div class="ln" style="left:359px;top:439px;">145</div>
<div class="code" style="left:497px;top:439px"><span class="k">"__plugin_info__"</span><span style="color:#CC7832">:</span> {</div>
<div class="ln" style="left:359px;top:461px;">146</div>
<div class="code" style="left:513px;top:461px"><span class="k">"name"</span><span style="color:#CC7832">:</span> <span class="s">"ap</span><span class="s">     </span><span class="s">at"</span><span class="p">,</span></div>
<div class="ln" style="left:359px;top:483px;">147</div>
<div class="code" style="left:513px;top:483px"><span class="k">"description"</span><span style="color:#CC7832">:</span> <span class="s">"ap</span><span class="s">    </span><span class="s">oat</span><span class="s"> </span><span class="p">,</span></div>
<div class="ln" style="left:359px;top:505px;">148</div>
<div class="code" style="left:513px;top:505px"><span class="k">"platforms"</span><span style="color:#CC7832">:</span> <span class="s">"Android"</span><span class="p">,</span></div>
<div class="ln" style="left:359px;top:527px;">149</div>
<div class="code" style="left:513px;top:527px"><span class="k">"url"</span><span style="color:#CC7832">:</span> <span class="s">""</span><span class="p">,</span></div>
<div class="ln" style="left:359px;top:549px;">150</div>
<div class="code" style="left:513px;top:549px"><span class="k">"android_package_name"</span><span style="color:#CC7832">:</span> <span class="s">" </span><span class="p">,</span></div>
<div class="ln" style="left:359px;top:571px;">151</div>
<div class="code" style="left:513px;top:571px"><span class="k">"ios_bundle_id"</span><span style="color:#CC7832">:</span> <span class="s">""</span><span class="p">,</span></div>
<div class="ln" style="left:359px;top:593px;">152</div>
<div class="code" style="left:513px;top:593px"><span class="k">"isCloud"</span><span style="color:#CC7832">:</span> <span class="b">false</span><span class="p">,</span></div>
<div class="ln" style="left:359px;top:615px;">153</div>
<div class="code" style="left:513px;top:615px"><span class="k">"bought"</span><span style="color:#CC7832">:</span> <span class="n">-1</span><span class="p">,</span></div>
<div class="ln" style="left:359px;top:637px;">154</div>
<div class="code" style="left:513px;top:637px"><span class="k">"pid"</span><span style="color:#CC7832">:</span> <span class="s">""</span><span class="p">,</span></div>
<div class="ln" style="left:359px;top:659px;">155</div>
<div class="code" style="left:513px;top:659px"><span class="k">"parameters"</span><span style="color:#CC7832">:</span> {}</div>
<div class="ln" style="left:359px;top:681px;">156</div>
<div class="code" style="left:497px;top:681px">}</div>
<div class="ln" style="left:359px;top:703px;">157</div>
<div class="code" style="left:481px;top:703px">}</div>
<div class="ln" style="left:359px;top:725px;">158</div>
<div class="code" style="left:465px;top:725px">}</div>
<div class="ln" style="left:359px;top:747px;">159</div>
<div class="code" style="left:449px;top:747px">}<span class="p">,</span></div>
<div class="ln" style="left:359px;top:769px;">160</div>
<div class="code" style="left:449px;top:769px"><span class="k">"quickapp"</span><span style="color:#CC7832">:</span> {}<span class="p">,</span></div>
<div class="ln" style="left:359px;top:791px;">161</div>
<div class="code" style="left:449px;top:791px"><span class="k">"mp-weixin"</span><span style="color:#CC7832">:</span> {</div>
<div class="ln" style="left:359px;top:813px;">162</div>
<div class="code" style="left:465px;top:813px"><span class="k">"appid"</span><span style="color:#CC7832">:</span> <span class="s">""</span><span class="p">,</span></div>
<div class="ln" style="left:359px;top:835px;">163</div>
<div class="code" style="left:465px;top:835px"><span class="k">"setting"</span><span style="color:#CC7832">:</span> {</div>
<div class="ln" style="left:359px;top:857px;">164</div>
<div class="code" style="left:481px;top:857px"><span class="k">"urlCheck"</span><span style="color:#CC7832">:</span> <span class="b">false</span></div>
<div class="ln" style="left:359px;top:879px;">165</div>
<div class="code" style="left:465px;top:879px">}<span class="p">,</span></div>
<div class="ln" style="left:359px;top:901px;">166</div>
<div class="code" style="left:465px;top:901px"><span class="k">"usingComponents"</span><span style="color:#CC7832">:</span> <span class="b">true</span><span class="p">,</span></div>
<div class="ln" style="left:359px;top:923px;">167</div>
<div class="code" style="left:465px;top:923px"><span class="k">"darkmode"</span><span style="color:#CC7832">:</span> <span class="b">true</span><span class="p">,</span></div>
<div class="ln" style="left:359px;top:945px;">168</div>
<div class="code" style="left:465px;top:945px"><span class="k">"themeLocation"</span><span style="color:#CC7832">:</span> <span class="s">"theme.json"</span></div>
<svg class="a" style="left:421px;top:112px" width="13" height="14"><path d="M2 1.5H11V8L6.5 12.5L2 8Z" fill="#313335" stroke="#6E7173" stroke-width="1"/><path d="M4.5 6H8.5" stroke="#6E7173"/></svg>
<svg class="a" style="left:421px;top:156px" width="13" height="14"><path d="M2 12.5H11V6L6.5 1.5L2 6Z" fill="#313335" stroke="#6E7173" stroke-width="1"/><path d="M4.5 8.5H8.5" stroke="#6E7173"/></svg>
<svg class="a" style="left:421px;top:178px" width="13" height="14"><path d="M2 12.5H11V6L6.5 1.5L2 6Z" fill="#313335" stroke="#6E7173" stroke-width="1"/><path d="M4.5 8.5H8.5" stroke="#6E7173"/></svg>
<svg class="a" style="left:421px;top:200px" width="13" height="14"><path d="M2 1.5H11V8L6.5 12.5L2 8Z" fill="#313335" stroke="#6E7173" stroke-width="1"/><path d="M4.5 6H8.5" stroke="#6E7173"/></svg>
<svg class="a" style="left:421px;top:244px" width="13" height="14"><path d="M2 12.5H11V6L6.5 1.5L2 6Z" fill="#313335" stroke="#6E7173" stroke-width="1"/><path d="M4.5 8.5H8.5" stroke="#6E7173"/></svg>
<svg class="a" style="left:421px;top:266px" width="13" height="14"><path d="M2 1.5H11V8L6.5 12.5L2 8Z" fill="#313335" stroke="#6E7173" stroke-width="1"/><path d="M4.5 6H8.5" stroke="#6E7173"/></svg>
<svg class="a" style="left:421px;top:288px" width="13" height="14"><path d="M2 1.5H11V8L6.5 12.5L2 8Z" fill="#313335" stroke="#6E7173" stroke-width="1"/><path d="M4.5 6H8.5" stroke="#6E7173"/></svg>
<svg class="a" style="left:421px;top:332px" width="13" height="14"><path d="M2 12.5H11V6L6.5 1.5L2 6Z" fill="#313335" stroke="#6E7173" stroke-width="1"/><path d="M4.5 8.5H8.5" stroke="#6E7173"/></svg>
<svg class="a" style="left:421px;top:354px" width="13" height="14"><path d="M2 12.5H11V6L6.5 1.5L2 6Z" fill="#313335" stroke="#6E7173" stroke-width="1"/><path d="M4.5 8.5H8.5" stroke="#6E7173"/></svg>
<svg class="a" style="left:421px;top:376px" width="13" height="14"><path d="M2 1.5H11V8L6.5 12.5L2 8Z" fill="#313335" stroke="#6E7173" stroke-width="1"/><path d="M4.5 6H8.5" stroke="#6E7173"/></svg>
<svg class="a" style="left:421px;top:398px" width="13" height="14"><path d="M2 2.5H11V11.5H2Z" fill="#313335" stroke="#6E7173" stroke-width="1"/><path d="M4.5 7H8.5M6.5 5V9" stroke="#6E7173"/></svg>
<svg class="a" style="left:421px;top:420px" width="13" height="14"><path d="M2 1.5H11V8L6.5 12.5L2 8Z" fill="#313335" stroke="#6E7173" stroke-width="1"/><path d="M4.5 6H8.5" stroke="#6E7173"/></svg>
<svg class="a" style="left:421px;top:442px" width="13" height="14"><path d="M2 1.5H11V8L6.5 12.5L2 8Z" fill="#313335" stroke="#6E7173" stroke-width="1"/><path d="M4.5 6H8.5" stroke="#6E7173"/></svg>
<svg class="a" style="left:421px;top:684px" width="13" height="14"><path d="M2 12.5H11V6L6.5 1.5L2 6Z" fill="#313335" stroke="#6E7173" stroke-width="1"/><path d="M4.5 8.5H8.5" stroke="#6E7173"/></svg>
<svg class="a" style="left:421px;top:706px" width="13" height="14"><path d="M2 12.5H11V6L6.5 1.5L2 6Z" fill="#313335" stroke="#6E7173" stroke-width="1"/><path d="M4.5 8.5H8.5" stroke="#6E7173"/></svg>
<svg class="a" style="left:421px;top:728px" width="13" height="14"><path d="M2 12.5H11V6L6.5 1.5L2 6Z" fill="#313335" stroke="#6E7173" stroke-width="1"/><path d="M4.5 8.5H8.5" stroke="#6E7173"/></svg>
<svg class="a" style="left:421px;top:750px" width="13" height="14"><path d="M2 12.5H11V6L6.5 1.5L2 6Z" fill="#313335" stroke="#6E7173" stroke-width="1"/><path d="M4.5 8.5H8.5" stroke="#6E7173"/></svg>
<svg class="a" style="left:421px;top:794px" width="13" height="14"><path d="M2 1.5H11V8L6.5 12.5L2 8Z" fill="#313335" stroke="#6E7173" stroke-width="1"/><path d="M4.5 6H8.5" stroke="#6E7173"/></svg>
<svg class="a" style="left:421px;top:838px" width="13" height="14"><path d="M2 1.5H11V8L6.5 12.5L2 8Z" fill="#313335" stroke="#6E7173" stroke-width="1"/><path d="M4.5 6H8.5" stroke="#6E7173"/></svg>
<svg class="a" style="left:421px;top:882px" width="13" height="14"><path d="M2 12.5H11V6L6.5 1.5L2 6Z" fill="#313335" stroke="#6E7173" stroke-width="1"/><path d="M4.5 8.5H8.5" stroke="#6E7173"/></svg>
<div class="a" style="left:449px;top:85px;width:1px;height:660px;background:#373737"></div>
<div class="a" style="left:465px;top:85px;width:1px;height:88px;background:#373737"></div>
<div class="a" style="left:465px;top:217px;width:1px;height:22px;background:#373737"></div>
<div class="a" style="left:465px;top:283px;width:1px;height:66px;background:#373737"></div>
<div class="a" style="left:465px;top:393px;width:1px;height:330px;background:#373737"></div>
<div class="a" style="left:481px;top:129px;width:1px;height:22px;background:#373737"></div>
<div class="a" style="left:481px;top:305px;width:1px;height:22px;background:#373737"></div>
<div class="a" style="left:481px;top:437px;width:1px;height:264px;background:#373737"></div>
<div class="a" style="left:497px;top:459px;width:1px;height:220px;background:#373737"></div>
<div class="a" style="left:449px;top:811px;width:1px;height:154px;background:#373737"></div>
<div class="a" style="left:465px;top:855px;width:1px;height:22px;background:#373737"></div>
<svg class="a" style="left:440px;top:240px" width="14" height="16"><circle cx="7" cy="6" r="4.5" fill="#F4AF3D"/><rect x="4.5" y="10" width="5" height="1.5" fill="#C9CCCE"/><rect x="4.5" y="12.5" width="5" height="1.5" fill="#C9CCCE"/></svg>
<div class="a" style="left:361px;top:965px;width:1538px;height:25px;background:#313335"></div>
<div class="a" style="left:361px;top:965px;width:1538px;height:1px;background:#323232"></div>
<div class="t" style="left:437px;top:968px;font-size:13px;color:#BBBBBB">app-plus</div>
<div class="a" style="left:1899px;top:58px;width:21px;height:932px;background:#3C3F41"></div>
<div class="a" style="left:1898px;top:58px;width:1px;height:932px;background:#323232"></div>
<svg class="a" style="left:1902px;top:65px" width="16" height="16"><path d="M2 12H14L12.5 10V6.5A4.5 4.5 0 0 0 3.5 6.5V10Z" fill="#AFB1B3"/><rect x="6.5" y="12.5" width="3" height="2" fill="#AFB1B3"/><circle cx="12.5" cy="3.5" r="3" fill="#E05555"/></svg>
<div class="t" style="left:1920px;top:83px;font-size:11px;line-height:20px;color:#BBBBBB;transform-origin:0 0;transform:rotate(90deg)">通知</div>
<div class="a" style="left:0;top:990px;width:1920px;height:20px;background:#3C3F41"></div>
<div class="a" style="left:0;top:990px;width:1920px;height:1px;background:#323232"></div>
<svg class="a" style="left:31px;top:995px" width="10" height="12"><path d="M2.5 1V11M2.5 8Q8 8 8 2" stroke="#AFB1B3" stroke-width="1.7" fill="none"/><circle cx="8" cy="2" r="1.5" fill="#AFB1B3"/></svg>
<div class="t" style="left:47px;top:992px;font-size:12px;color:#BBBBBB">Git</div>
<svg class="a" style="left:82px;top:996px" width="11" height="10"><path d="M0 1H2M0 5H2M0 9H2M4 1H11M4 5H11M4 9H11" stroke="#AFB1B3" stroke-width="1.6"/></svg>
<div class="t" style="left:98px;top:992px;font-size:12px;color:#BBBBBB">TODO</div>
<div class="a" style="left:150px;top:995px;width:11px;height:11px;border-radius:6px;background:#AFB1B3"></div><div class="a" style="left:155px;top:997px;width:1.5px;height:4px;background:#3C3F41"></div><div class="a" style="left:155px;top:1002px;width:1.5px;height:1.5px;background:#3C3F41"></div>
<div class="t" style="left:165px;top:992px;font-size:12px;color:#BBBBBB">问题</div>
<div class="a" style="left:207px;top:995px;width:11px;height:10px;background:#AFB1B3"></div><svg class="a" style="left:208px;top:996px" width="10" height="8"><path d="M1 1L4 4L1 7" stroke="#3C3F41" stroke-width="1.3" fill="none"/></svg>
<div class="t" style="left:222px;top:992px;font-size:12px;color:#BBBBBB">终端</div>
<div class="a" style="left:0;top:1010px;width:1920px;height:22px;background:#3C3F41"></div>
<div class="a" style="left:0;top:1010px;width:1920px;height:1px;background:#323232"></div>
<div class="a" style="left:7px;top:1015px;width:11px;height:11px;border:1px solid #AFB1B3"></div>
<div class="t" style="left:27px;top:1012px;font-size:12px;letter-spacing:0.28px;color:#BBBBBB">已将 1 个提交 推送到 origin/dev_lxl (48 分钟 之前)</div>
<div class="t" style="left:1459px;top:1011px;font-size:12px;color:#BBBBBB">116:7</div>
<div class="t" style="left:1501px;top:1009px;font-size:15px;font-weight:bold;font-style:italic;color:#E8232F">y</div>
<div class="t" style="left:1526px;top:1011px;font-size:12px;color:#BBBBBB">LF</div>
<div class="t" style="left:1550px;top:1011px;font-size:12px;color:#BBBBBB">UTF-8</div>
<svg class="a" style="left:1595px;top:1016px" width="13" height="10"><path d="M0.5 5Q6.5 -1 12.5 5Q6.5 11 0.5 5Z" fill="#AFB1B3"/><circle cx="6.5" cy="5" r="2.2" fill="#3C3F41"/><circle cx="6.5" cy="5" r="1" fill="#AFB1B3"/></svg>
<div class="t" style="left:1620px;top:1011px;font-size:12px;color:#BBBBBB">2 个空格</div>
<div class="t" style="left:1679px;top:1011px;font-size:12px;letter-spacing:0.3px;color:#BBBBBB">JSON:foxx-manifest.json</div>
<svg class="a" style="left:1832px;top:1014px" width="10" height="13"><path d="M2.5 1V12M2.5 9Q8 9 8 3" stroke="#AFB1B3" stroke-width="1.7" fill="none"/><circle cx="8" cy="2.5" r="1.6" fill="#AFB1B3"/></svg>
<div class="t" style="left:1847px;top:1011px;font-size:12px;color:#BBBBBB">dev_lxl</div>
<svg class="a" style="left:1894px;top:1014px" width="14" height="13"><path d="M2 5V3A3 3 0 0 1 8 3" stroke="#AFB1B3" stroke-width="1.5" fill="none"/><rect x="5" y="6" width="8" height="6" fill="#AFB1B3"/></svg>
<div class="a" style="left:633px;top:393px;width:415px;height:22px;background:#3D3D3D"></div>
<div class="a" style="left:512px;top:399px;width:16px;height:11px;background:#3B383E"></div>
<div class="a" style="left:528px;top:399px;width:13px;height:11px;background:#383437"></div>
<div class="a" style="left:541px;top:396px;width:14px;height:14px;background:#423B40"></div>
<div class="a" style="left:555px;top:399px;width:15px;height:11px;background:#4A5878"></div>
<div class="a" style="left:570px;top:399px;width:15px;height:11px;background:#3A4555"></div>
<div class="a" style="left:585px;top:399px;width:15px;height:12px;background:#2A6686"></div>
<div class="a" style="left:600px;top:396px;width:15px;height:15px;background:#3A3338"></div>
<div class="a" style="left:615px;top:399px;width:16px;height:12px;background:#2C6A8E"></div>
<div class="a" style="left:631px;top:396px;width:15px;height:15px;background:#4A4545"></div>
<div class="a" style="left:646px;top:399px;width:14px;height:13px;background:#2B779D"></div>
<div class="a" style="left:660px;top:399px;width:16px;height:13px;background:#454545"></div>
<div class="a" style="left:676px;top:393px;width:15px;height:7px;background:#3E3E3E"></div>
<div class="a" style="left:676px;top:400px;width:15px;height:15px;background:#474747"></div>
<div class="a" style="left:691px;top:393px;width:15px;height:7px;background:#3C3C3C"></div>
<div class="a" style="left:691px;top:400px;width:15px;height:15px;background:#474747"></div>
<div class="a" style="left:706px;top:393px;width:15px;height:7px;background:#3A3A3A"></div>
<div class="a" style="left:706px;top:400px;width:15px;height:15px;background:#3E3E3E"></div>
<div class="a" style="left:721px;top:393px;width:15px;height:7px;background:#3D3D3D"></div>
<div class="a" style="left:721px;top:400px;width:15px;height:15px;background:#3F3F3F"></div>
<div class="a" style="left:736px;top:393px;width:15px;height:7px;background:#404040"></div>
<div class="a" style="left:736px;top:400px;width:15px;height:15px;background:#3E3E3E"></div>
<div class="a" style="left:751px;top:393px;width:15px;height:7px;background:#414141"></div>
<div class="a" style="left:751px;top:400px;width:15px;height:15px;background:#3A3A3A"></div>
<div class="a" style="left:766px;top:393px;width:15px;height:7px;background:#3B3B3B"></div>
<div class="a" style="left:766px;top:400px;width:15px;height:15px;background:#3A3A3A"></div>
<div class="a" style="left:781px;top:393px;width:15px;height:7px;background:#3F3F3F"></div>
<div class="a" style="left:781px;top:400px;width:15px;height:15px;background:#4A4A4A"></div>
<div class="a" style="left:796px;top:393px;width:15px;height:7px;background:#3E3E3E"></div>
<div class="a" style="left:796px;top:400px;width:15px;height:15px;background:#3A3A3A"></div>
<div class="a" style="left:811px;top:393px;width:15px;height:7px;background:#363636"></div>
<div class="a" style="left:811px;top:400px;width:15px;height:15px;background:#3F3F3F"></div>
<div class="a" style="left:826px;top:393px;width:15px;height:7px;background:#404040"></div>
<div class="a" style="left:826px;top:400px;width:15px;height:15px;background:#4A4A4A"></div>
<div class="a" style="left:841px;top:393px;width:15px;height:7px;background:#3F3F3F"></div>
<div class="a" style="left:841px;top:400px;width:15px;height:15px;background:#3E3E3E"></div>
<div class="a" style="left:856px;top:393px;width:15px;height:7px;background:#3A3A3A"></div>
<div class="a" style="left:856px;top:400px;width:15px;height:15px;background:#3F3F3F"></div>
<div class="a" style="left:871px;top:393px;width:15px;height:7px;background:#3C3C3C"></div>
<div class="a" style="left:871px;top:400px;width:15px;height:15px;background:#3D3D3D"></div>
<div class="a" style="left:886px;top:393px;width:15px;height:7px;background:#353535"></div>
<div class="a" style="left:886px;top:400px;width:15px;height:15px;background:#4A4A4A"></div>
<div class="a" style="left:901px;top:393px;width:15px;height:7px;background:#353535"></div>
<div class="a" style="left:901px;top:400px;width:15px;height:15px;background:#3D3D3D"></div>
<div class="a" style="left:916px;top:393px;width:15px;height:7px;background:#383838"></div>
<div class="a" style="left:916px;top:400px;width:15px;height:15px;background:#3C3C3C"></div>
<div class="a" style="left:931px;top:393px;width:15px;height:7px;background:#353535"></div>
<div class="a" style="left:931px;top:400px;width:15px;height:15px;background:#3C3C3C"></div>
<div class="a" style="left:946px;top:393px;width:15px;height:7px;background:#3C3C3C"></div>
<div class="a" style="left:946px;top:400px;width:15px;height:15px;background:#4A4A4A"></div>
<div class="a" style="left:961px;top:393px;width:15px;height:7px;background:#3D3D3D"></div>
<div class="a" style="left:961px;top:400px;width:15px;height:15px;background:#383838"></div>
<div class="a" style="left:976px;top:393px;width:15px;height:7px;background:#3E3E3E"></div>
<div class="a" style="left:976px;top:400px;width:15px;height:15px;background:#4A4A4A"></div>
<div class="a" style="left:991px;top:393px;width:15px;height:7px;background:#3E3E3E"></div>
<div class="a" style="left:991px;top:400px;width:15px;height:15px;background:#3E3E3E"></div>
<div class="a" style="left:1006px;top:393px;width:15px;height:7px;background:#3F3F3F"></div>
<div class="a" style="left:1006px;top:400px;width:15px;height:15px;background:#3D3D3D"></div>
<div class="a" style="left:1021px;top:393px;width:15px;height:7px;background:#3D3D3D"></div>
<div class="a" style="left:1021px;top:400px;width:15px;height:15px;background:#3E3E3E"></div>
<div class="a" style="left:1036px;top:393px;width:12px;height:7px;background:#3C3C3C"></div>
<div class="a" style="left:1036px;top:400px;width:12px;height:15px;background:#3D3D3D"></div>
<div class="code" style="left:675px;top:395px;color:#8a8a8a;opacity:0.22;filter:blur(0.8px)">de key": "c</div>
<div class="code" style="left:1025px;top:395px">..}<span class="p">,</span></div>
<div class="a" style="left:605px;top:464px;width:34px;height:14px;background:#3F463C;filter:blur(2px)"></div>
<div class="a" style="left:658px;top:486px;width:30px;height:14px;background:#3F463C;filter:blur(2px)"></div>
<div class="a" style="left:35px;top:180px;width:221px;height:130px;border:4px solid #17A5E7"></div>
<div class="a" style="left:363px;top:50px;width:136px;height:46px;border:4px solid #17A5E7"></div>
<div class="a" style="left:471px;top:412px;width:249px;height:293px;border:4px solid #17A5E7;border-top:none"></div>
<div class="a" style="left:471px;top:412px;width:201px;height:4px;background:#17A5E7"></div>
<div class="a" style="left:672px;top:413px;width:48px;height:2px;background:#3A6E8A"></div>
<div class="a" style="left:672px;top:415px;width:48px;height:2px;background:#17A5E7"></div>
<svg class="a" style="left:0;top:0" width="1920" height="1032"><path d="M453 101L537 410" stroke="#17A5E7" stroke-width="4" fill="none"/><path d="M527 400L537.5 412L541 397" stroke="#17A5E7" stroke-width="4" fill="none" stroke-linejoin="round"/></svg>
<svg class="a" style="left:68px;top:340px" width="24" height="46"><path d="M11 3H18.5V42H11V14Q7 18 3 19.5V12.5Q9 9.5 11 3Z" fill="#17A5E7"/></svg>
<div class="a" style="left:100px;top:374px;width:8.5px;height:8.5px;border-radius:5px;background:#17A5E7"></div>
<div class="a" style="left:111px;top:341px;font-family:'Liberation Sans',sans-serif;font-size:48px;line-height:48px;font-weight:bold;color:#17A5E7;-webkit-text-stroke:2.2px #17A5E7;white-space:pre;transform:scaleY(0.93);transform-origin:0 0">放</div>
<div class="a" style="left:161px;top:341px;font-family:'Liberation Sans',sans-serif;font-size:48px;line-height:48px;font-weight:bold;color:#17A5E7;-webkit-text-stroke:2.2px #17A5E7;white-space:pre;transform:scaleY(0.93);transform-origin:0 0">入</div>
<div class="a" style="left:210px;top:341px;font-family:'Liberation Sans',sans-serif;font-size:48px;line-height:48px;font-weight:bold;color:#17A5E7;-webkit-text-stroke:2.2px #17A5E7;white-space:pre;transform:scaleY(0.93);transform-origin:0 0">原</div>
<div class="a" style="left:262px;top:341px;font-family:'Liberation Sans',sans-serif;font-size:48px;line-height:48px;font-weight:bold;color:#17A5E7;-webkit-text-stroke:2.2px #17A5E7;white-space:pre;transform:scaleY(0.93);transform-origin:0 0">生</div>
<div class="a" style="left:311px;top:341px;font-family:'Liberation Sans',sans-serif;font-size:48px;line-height:48px;font-weight:bold;color:#17A5E7;-webkit-text-stroke:2.2px #17A5E7;white-space:pre;transform:scaleY(0.93);transform-origin:0 0">插</div>
<div class="a" style="left:359px;top:341px;font-family:'Liberation Sans',sans-serif;font-size:48px;line-height:48px;font-weight:bold;color:#17A5E7;-webkit-text-stroke:2.2px #17A5E7;white-space:pre;transform:scaleY(0.93);transform-origin:0 0">件</div>
<div class="a" style="left:559px;top:94px;width:9px;height:9px;border-radius:5px;background:#17A5E7"></div>
<div class="a" style="left:526px;top:58px;font-family:'Liberation Sans',sans-serif;font-size:52px;line-height:52px;font-weight:bold;color:#17A5E7;-webkit-text-stroke:2.2px #17A5E7;white-space:pre;transform:scaleY(1.0);transform-origin:0 0">2</div>
<div class="a" style="left:572px;top:64px;font-family:'Liberation Sans',sans-serif;font-size:48px;line-height:48px;font-weight:bold;color:#17A5E7;-webkit-text-stroke:2.2px #17A5E7;white-space:pre;transform:scaleY(0.93);transform-origin:0 0">使</div>
<div class="a" style="left:623px;top:64px;font-family:'Liberation Sans',sans-serif;font-size:48px;line-height:48px;font-weight:bold;color:#17A5E7;-webkit-text-stroke:2.2px #17A5E7;white-space:pre;transform:scaleY(0.93);transform-origin:0 0">用</div>
<div class="a" style="left:672px;top:64px;font-family:'Liberation Sans',sans-serif;font-size:48px;line-height:48px;font-weight:bold;color:#17A5E7;-webkit-text-stroke:2.2px #17A5E7;white-space:pre;transform:scaleY(0.93);transform-origin:0 0">插</div>
<div class="a" style="left:721px;top:64px;font-family:'Liberation Sans',sans-serif;font-size:48px;line-height:48px;font-weight:bold;color:#17A5E7;-webkit-text-stroke:2.2px #17A5E7;white-space:pre;transform:scaleY(0.93);transform-origin:0 0">件</div>
</body></html>
